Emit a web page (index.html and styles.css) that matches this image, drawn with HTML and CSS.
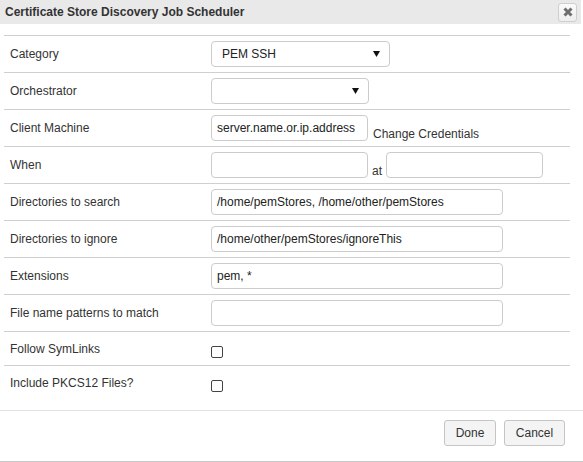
FILE: index.html
```html
<!DOCTYPE html>
<html>
<head>
<meta charset="utf-8">
<link rel="stylesheet" href="styles.css">
</head>
<body>
<div class="dialog">
  <div class="titlebar">
    <span class="title">Certificate Store Discovery Job Scheduler</span>
    <button class="close" type="button" aria-label="close">
      <svg width="10" height="10" viewBox="0 0 10 10"><path d="M1.5 1.5L8.5 8.5M8.5 1.5L1.5 8.5" stroke="#6e6e6e" stroke-width="3" stroke-linecap="butt"/></svg>
    </button>
  </div>
  <div class="body">
    <table class="form">
      <colgroup><col class="c-label"><col></colgroup>
      <tr>
        <td class="label">Category</td>
        <td><span class="sel w179"><span class="sel-text">PEM SSH</span><svg class="arrow" width="7" height="6" viewBox="0 0 7 6"><path d="M0 0H7L3.5 6Z" fill="#111"/></svg></span></td>
      </tr>
      <tr>
        <td class="label">Orchestrator</td>
        <td><span class="sel w158"><span class="sel-text"></span><svg class="arrow" width="7" height="6" viewBox="0 0 7 6"><path d="M0 0H7L3.5 6Z" fill="#111"/></svg></span></td>
      </tr>
      <tr>
        <td class="label">Client Machine</td>
        <td><div class="line"><input class="inp w157" type="text" value="server.name.or.ip.address"><span class="after cc">Change Credentials</span></div></td>
      </tr>
      <tr>
        <td class="label">When</td>
        <td><div class="line"><input class="inp w157" type="text" value=""><span class="after at">at</span><input class="inp w157" type="text" value=""></div></td>
      </tr>
      <tr>
        <td class="label">Directories to search</td>
        <td><input class="inp w292" type="text" value="/home/pemStores, /home/other/pemStores"></td>
      </tr>
      <tr>
        <td class="label">Directories to ignore</td>
        <td><input class="inp w292" type="text" value="/home/other/pemStores/ignoreThis"></td>
      </tr>
      <tr>
        <td class="label">Extensions</td>
        <td><input class="inp w292" type="text" value="pem, *"></td>
      </tr>
      <tr>
        <td class="label">File name patterns to match</td>
        <td><input class="inp w292" type="text" value=""></td>
      </tr>
      <tr class="chkrow">
        <td class="label">Follow SymLinks</td>
        <td><input class="chk" type="checkbox"></td>
      </tr>
      <tr class="chkrow">
        <td class="label">Include PKCS12 Files?</td>
        <td><input class="chk" type="checkbox"></td>
      </tr>
    </table>
  </div>
  <div class="footer">
    <button class="btn done" type="button">Done</button>
    <button class="btn cancel" type="button">Cancel</button>
  </div>
</div>
</body>
</html>
```
FILE: styles.css
```css
html, body {
  margin: 0;
  padding: 0;
  background: #fff;
}
body {
  font-family: "Liberation Sans", Arial, sans-serif;
  font-size: 12px;
  color: #333;
}
.dialog {
  width: 583px;
  height: 462px;
  box-sizing: border-box;
  border-bottom: 1px solid #c8c8c8;
}
.titlebar {
  width: 581px;
  height: 24px;
  background: #e9e9e9;
  display: flex;
  align-items: center;
  justify-content: space-between;
  box-sizing: border-box;
  padding: 0 4px 0 5px;
}
.title {
  font-weight: bold;
  color: #333;
  font-size: 12px;
}
.close {
  width: 19px;
  height: 19px;
  padding: 0;
  margin: 0;
  border: 1px solid #cfcfcf;
  border-radius: 3px;
  background: linear-gradient(#fafafa, #eeeeee);
  display: flex;
  align-items: center;
  justify-content: center;
}
.body {
  padding: 11px 13px 11px 4px;
}
.form {
  width: 566px;
  border-collapse: collapse;
  table-layout: fixed;
}
.c-label {
  width: 201px;
}
.form td {
  border-top: 1px solid #cfcfcf;
  padding: 5px 6px;
  vertical-align: middle;
}
.label {
  color: #333;
  line-height: 14px;
}
.line {
  display: flex;
  align-items: flex-end;
}
.after {
  line-height: 14px;
  color: #333;
}
.cc {
  margin-left: 5px;
}
.at {
  margin: 0 4px 0 4px;
}
.inp {
  box-sizing: border-box;
  height: 26px;
  border: 1px solid #cccccc;
  border-radius: 4px;
  padding: 0 5px;
  font-family: "Liberation Sans", Arial, sans-serif;
  font-size: 12px;
  color: #222;
  margin: 0;
  display: block;
  outline: none;
}
.w157 { width: 157px; }
.w292 { width: 292px; }
.sel {
  box-sizing: border-box;
  height: 26px;
  border: 1px solid #cccccc;
  border-radius: 4px;
  display: flex;
  align-items: center;
  justify-content: space-between;
  padding: 0 9px 0 10px;
  color: #222;
}
.w179 { width: 179px; }
.w158 { width: 158px; }
.chkrow td {
  vertical-align: middle;
}
.chk {
  -webkit-appearance: none;
  appearance: none;
  display: block;
  width: 12px;
  height: 12px;
  box-sizing: border-box;
  border: 1px solid #444;
  border-radius: 2px;
  background: #fff;
  margin: 9px 0 2px 0;
}
.footer {
  border-top: 1px solid #e2e2e2;
  display: flex;
  justify-content: flex-end;
  gap: 8px;
  padding: 9px 18px 0 0;
}
.btn {
  box-sizing: border-box;
  height: 26px;
  border: 1px solid #c5c5c5;
  border-radius: 3px;
  background: #f4f4f4;
  font-family: "Liberation Sans", Arial, sans-serif;
  font-size: 12px;
  color: #333;
  padding: 0;
  margin: 0;
}
.done { width: 52px; }
.cancel { width: 61px; }
```
